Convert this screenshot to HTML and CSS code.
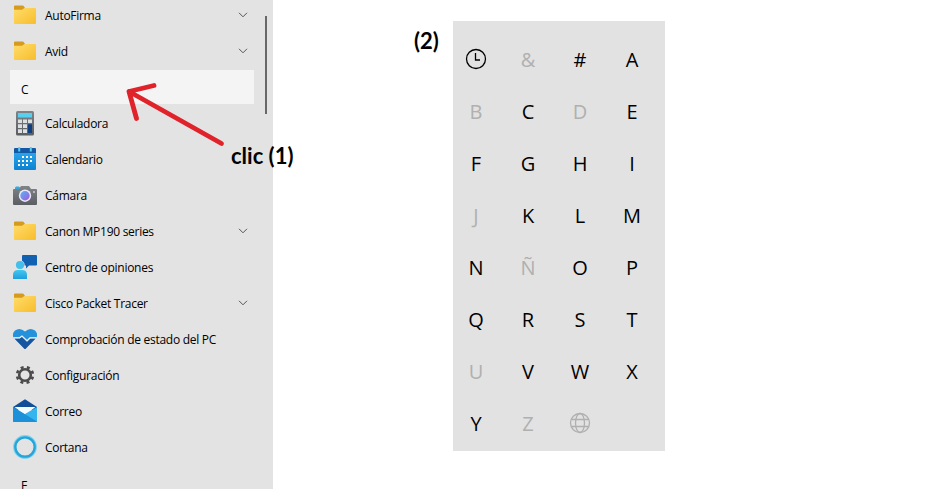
FILE: index.html
```html
<!DOCTYPE html>
<html lang="es">
<head>
<meta charset="utf-8">
<title>Menú Inicio</title>
<link rel="stylesheet" href="styles.css">
</head>
<body>
<svg class="defs" aria-hidden="true">
  <defs>
    <linearGradient id="gold" x1="0" y1="0" x2="1" y2="1"><stop offset="0" stop-color="#ffdc6b"/><stop offset="1" stop-color="#f8bd2b"/></linearGradient>
    <linearGradient id="sky" x1="0" y1="0" x2="0" y2="1"><stop offset="0" stop-color="#2ba5ea"/><stop offset="1" stop-color="#0b82d2"/></linearGradient>
    <linearGradient id="person" x1="0" y1="0" x2="0" y2="1"><stop offset="0" stop-color="#43c8ef"/><stop offset="1" stop-color="#1f9ddd"/></linearGradient>
    <linearGradient id="lens" x1="0" y1="0" x2="1" y2="1"><stop offset="0" stop-color="#54b8f5"/><stop offset="1" stop-color="#a955dd"/></linearGradient>
    <linearGradient id="body" x1="0" y1="0" x2="0" y2="1"><stop offset="0" stop-color="#808488"/><stop offset="1" stop-color="#5a5e63"/></linearGradient>
    <symbol id="folder" viewBox="0 0 26 26">
      <path d="M2 3.500q0-1 1-1h7.500q1 0 1.500 1l1 1.500V8H2z" fill="#d69a1c"/>
      <path d="M2 6.700h8l2.500-1.700H23q1 0 1 1V20q0 1-1 1H3q-1 0-1-1z" fill="url(#gold)"/>
    </symbol>
    <symbol id="chevron" viewBox="0 0 10 6"><path d="M1 .8l4 4 4-4" fill="none" stroke="#555" stroke-width="1"/></symbol>
  </defs>
</svg>
<main class="scene">
  <nav class="menu">
    <ul class="apps">
      <li class="row"><svg class="icon"><use href="#folder"/></svg><span class="name">AutoFirma</span><svg class="chev"><use href="#chevron"/></svg></li>
      <li class="row"><svg class="icon"><use href="#folder"/></svg><span class="name">Avid</span><svg class="chev"><use href="#chevron"/></svg></li>
      <li class="heading active">C</li>
      <li class="row"><svg class="icon" viewBox="0 0 26 26">
        <rect x="4" y="0" width="18" height="24.500" rx="1.500" fill="url(#body)"/>
        <rect x="6" y="2" width="14" height="4.500" fill="#55d0ee"/>
        <path d="M6 8.500h4V12H6zM11 8.500h4V12h-4zM16 8.500h4V12h-4zM6 13.300h4v3.700H6zM11 13.300h4v3.700h-4zM6 18.300h4V22H6zM11 18.300h4V22h-4z" fill="#dedfe1"/>
        <path d="M16 13.300h4V22h-4z" fill="#103f80"/></svg><span class="name">Calculadora</span></li>
      <li class="row"><svg class="icon" viewBox="0 0 26 26">
        <path d="M2 5h22v17q0 1-1 1H3q-1 0-1-1z" fill="url(#sky)"/>
        <path d="M2 2q0-1 1-1h20q1 0 1 1v4H2z" fill="#1258a4"/>
        <path d="M7.200 0v4.500M18.800 0v4.500" stroke="#5bcdf2" stroke-width="2"/>
        <path d="M10 10h11M6 14h15M6 18h11" stroke="#fff" stroke-width="2" stroke-dasharray="2 2"/></svg><span class="name">Calendario</span></li>
      <li class="row"><svg class="icon" viewBox="0 0 26 26">
        <path d="M3 5q0-1.500 1.500-1.500h2Q8 3.500 8 5v2H3z" fill="#35a9df"/>
        <path d="M1 7q0-1 1-1h5l2-3h8l2 3h5q1 0 1 1v14q0 1-1 1H2q-1 0-1-1z" fill="url(#body)"/>
        <circle cx="13" cy="12.700" r="6.200" fill="#e9eafa"/><circle cx="13" cy="12.700" r="4.700" fill="url(#lens)"/>
        <circle cx="22" cy="9" r="1" fill="#ccc"/></svg><span class="name">Cámara</span></li>
      <li class="row"><svg class="icon"><use href="#folder"/></svg><span class="name">Canon MP190 series</span><svg class="chev"><use href="#chevron"/></svg></li>
      <li class="row"><svg class="icon" viewBox="0 0 26 26">
        <path d="M11 0h13q1 0 1 1v8.500q0 1-1 1h-7L14 13.500v-3h-3q-1 0-1-1V1q0-1 1-1z" fill="#1261b0"/>
        <circle cx="8" cy="10" r="4.700" fill="#e4e4e4"/><circle cx="8" cy="10" r="4.100" fill="#43bfe9"/>
        <path d="M1 24v-4q0-5 5-5h4q5 0 5 5v4z" fill="url(#person)"/></svg><span class="name">Centro de opiniones</span></li>
      <li class="row"><svg class="icon"><use href="#folder"/></svg><span class="name">Cisco Packet Tracer</span><svg class="chev"><use href="#chevron"/></svg></li>
      <li class="row"><svg class="icon" viewBox="0 0 26 26">
        <path d="M1.300 10.500Q0 6 3 3.500Q8 0 13 4.500Q18 0 23 3.500Q26 6 24.700 10.500H18l-3 3.500-5-5-2 1.500z" fill="#2492da"/>
        <path d="M2.300 11.500h5.500L10 9.800l5 5 3.500-3.300h5.200L14 21.500q-1 1-2 0z" fill="#13559f"/>
        <path d="M1.500 10.700h6L10 9l5 4.700 3-3h6.500" fill="none" stroke="#e9f3fa" stroke-width="1.100"/></svg><span class="name">Comprobación de estado del PC</span></li>
      <li class="row"><svg class="icon" viewBox="0 0 26 26">
        <g fill="none" stroke="#4b4b4b"><circle cx="13" cy="12" r="5.800" stroke-width="2.600"/>
        <circle cx="13" cy="12" r="7.900" stroke-width="2.700" stroke-dasharray="3 3.205" transform="rotate(11.700 13 12)"/></g></svg><span class="name">Configuración</span></li>
      <li class="row"><svg class="icon" viewBox="0 0 26 26">
        <path d="M1 8L13 .3 25 8v3H1z" fill="#124f98"/>
        <path d="M2.500 8h21L13 16z" fill="#f6fbff"/>
        <path d="M1 8l12 7.500L1 23z" fill="#2ba5e4"/>
        <path d="M25 8v14q0 1-1 1H2q-1 0-1-1z" fill="#35b4ed"/>
        <path d="M1 8l24 14.500q-.5.500-1 .5H2q-1 0-1-1z" fill="#1c90d9"/></svg><span class="name">Correo</span></li>
      <li class="row"><svg class="icon" viewBox="0 0 26 26">
        <circle cx="13" cy="12" r="10.300" fill="none" stroke="#7dd3f2" stroke-width="3.200"/>
        <circle cx="13" cy="12" r="9.700" fill="none" stroke="#27a5d8" stroke-width="2.300"/></svg><span class="name">Cortana</span></li>
      <li class="heading">F</li>
    </ul>
    <div class="scrollbar"></div>
  </nav>
  <section class="jump">
    <div class="step">(2)</div>
    <div class="letters">
      <div class="grid">
        <span><svg class="glyph" viewBox="0 0 22 22"><circle cx="11" cy="11" r="9.500"/><path d="M10.500 5v7h4.500"/></svg></span><span class="off">&amp;</span><span>#</span><span>A</span>
        <span class="off">B</span><span>C</span><span class="off">D</span><span>E</span>
        <span>F</span><span>G</span><span>H</span><span>I</span>
        <span class="off">J</span><span>K</span><span>L</span><span>M</span>
        <span>N</span><span class="off">Ñ</span><span>O</span><span>P</span>
        <span>Q</span><span>R</span><span>S</span><span>T</span>
        <span class="off">U</span><span>V</span><span>W</span><span>X</span>
        <span>Y</span><span class="off">Z</span><span class="off"><svg class="glyph" viewBox="0 0 22 22"><circle cx="11" cy="11" r="9.500"/><ellipse cx="11" cy="11" rx="4.500" ry="9.500"/><path d="M2.500 7.500h17M2.500 14.500h17"/></svg></span>
      </div>
    </div>
  </section>
  <svg class="arrow" viewBox="0 0 110 70"><path d="M101.500 63.500L9 11.500M34 5.500L9 11.500l7.500 27" fill="none" stroke="#e0222b" stroke-width="4.800" stroke-linecap="round" stroke-linejoin="round"/></svg>
  <div class="callout">clic (1)</div>
</main>
</body>
</html>
```

FILE: styles.css
```css
* { box-sizing: border-box; }
body { margin: 0; background: #fff; color: #000; font-family: "Open Sans", "Noto Sans", sans-serif; }
.defs { position: absolute; width: 0; height: 0; }
.scene { position: relative; display: flex; width: 937px; height: 489px; overflow: hidden; }

.menu { display: flex; width: 273px; height: 489px; background: #e3e3e3; overflow: hidden; }
.apps { flex: none; width: 254px; margin: -2px 0 0; padding: 0 0 0 10px; list-style: none; font-size: 12px; }
.row { display: flex; align-items: center; height: 36px; padding: 0 6px 0 2px; }
.icon { flex: none; width: 26px; height: 26px; }
.name { flex: 1; margin-left: 7px; line-height: 18px; letter-spacing: -0.280px; white-space: nowrap; }
.chev { width: 10px; height: 6px; margin-top: -2px; }
.heading { height: 34px; margin: 0 0 2px; padding-left: 11px; line-height: 40px; }
.heading.active { background: #f4f4f4; }
.scrollbar { width: 2px; height: 98px; margin: 16px 0 0 10.500px; background: #686868; }

.jump { display: flex; margin-left: 141px; padding-top: 21px; }
.step { width: 39px; padding-top: 7px; }
.step, .callout { font-family: Lato, sans-serif; font-size: 22px; font-weight: 700; line-height: 26px; white-space: nowrap; }
.letters { width: 212px; height: 430px; padding-top: 12px; background: #e2e2e2; }
.grid { display: grid; grid-template-columns: repeat(4, 52px); grid-auto-rows: 52px; margin-left: -3px; font-size: 20px; }
.grid span { display: flex; align-items: center; justify-content: center; }
.grid .off { color: #b0b0b0; }
.glyph { width: 22px; height: 22px; fill: none; stroke: currentColor; stroke-width: 1.300; }

.arrow { position: absolute; left: 120px; top: 80px; width: 110px; height: 70px; }
.callout { position: absolute; left: 231px; top: 143px; }
```
